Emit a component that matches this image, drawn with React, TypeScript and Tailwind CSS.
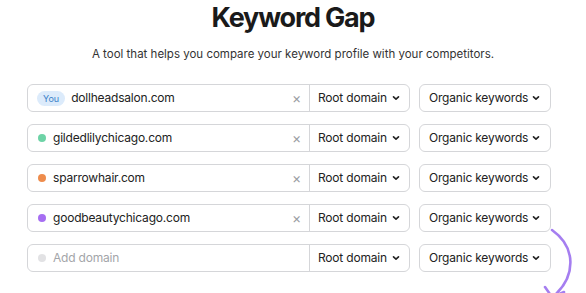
import React from 'react'

type Row = {
  domain: string
  dot?: string
  you?: boolean
  placeholder?: boolean
}

const rows: Row[] = [
  { domain: 'dollheadsalon.com', you: true },
  { domain: 'gildedlilychicago.com', dot: 'bg-[#6dd3a6]' },
  { domain: 'sparrowhair.com', dot: 'bg-[#ee8c4c]' },
  { domain: 'goodbeautychicago.com', dot: 'bg-[#a66ef2]' },
  { domain: 'Add domain', dot: 'bg-[#e2e2e4]', placeholder: true },
]

const Chevron = () => (
  <svg className="h-3 w-3 shrink-0 text-[#222]" viewBox="0 0 12 12" fill="none">
    <path d="M3.5 4.8 6 7.2l2.5-2.4" stroke="currentColor" strokeWidth={1.6} strokeLinecap="round" strokeLinejoin="round" />
  </svg>
)

const DomainRow = ({ row }: { row: Row }) => (
  <div className="flex h-[28px] gap-[9px] whitespace-nowrap text-[12px] tracking-[-0.2px]">
    <div className="flex w-[383px] rounded-[6px] border border-[#d5d6d9] bg-white">
      <div className="flex flex-1 items-center pl-[9px] pr-[8px]">
        {row.you ? (
          <span className="mr-[6px] rounded-full bg-[#dcebfb] px-[6px] py-[1px] text-[9px] leading-[13px] tracking-normal text-[#3b82c9]">
            You
          </span>
        ) : (
          <span className={`ml-[1px] mr-[7px] h-[8px] w-[8px] rounded-full ${row.dot}`} />
        )}
        <span className={`flex-1 ${row.placeholder ? 'text-[#a3a5a9]' : 'text-[#222]'}`}>{row.domain}</span>
        {!row.placeholder && <span className="text-[14px] leading-none text-[#9a9ca1]">×</span>}
      </div>
      <div className="flex w-[100px] items-center justify-between border-l border-[#d5d6d9] pl-[8px] pr-[7px]">
        <span className="text-[#222]">Root domain</span>
        <Chevron />
      </div>
    </div>
    <div className="flex w-[132px] items-center justify-between rounded-[6px] border border-[#d5d6d9] bg-white pl-[9px] pr-[8px]">
      <span className="text-[#222]">Organic keywords</span>
      <Chevron />
    </div>
  </div>
)

export default function App() {
  return (
    <div className="relative h-[293px] w-[586px] overflow-hidden bg-white font-['Inter',sans-serif]">
      <div className="flex flex-col items-center whitespace-nowrap">
        <h1 className="mt-[1px] text-[27px] font-bold leading-[34px] tracking-[-1.2px] text-[#1a1a1a]">Keyword Gap</h1>
        <p className="mt-[11px] text-[11.5px] leading-[16px] text-[#333]">
          A tool that helps you compare your keyword profile with your competitors.
        </p>
      </div>
      <div className="ml-[27px] mt-[22px] flex flex-col gap-[12px]">
        {rows.map((r) => (
          <DomainRow key={r.domain} row={r} />
        ))}
      </div>
      <svg className="absolute left-[540px] top-[225px]" width="46" height="68" viewBox="0 0 46 68" fill="none">
        <path d="M12 5 C 36 22, 36 50, 15 70" stroke="#a57ef0" strokeWidth={2.6} strokeLinecap="round" />
        <path d="M5 62 L 12 72 L 24 67" stroke="#a57ef0" strokeWidth={2.6} strokeLinecap="round" strokeLinejoin="round" />
      </svg>
    </div>
  )
}
